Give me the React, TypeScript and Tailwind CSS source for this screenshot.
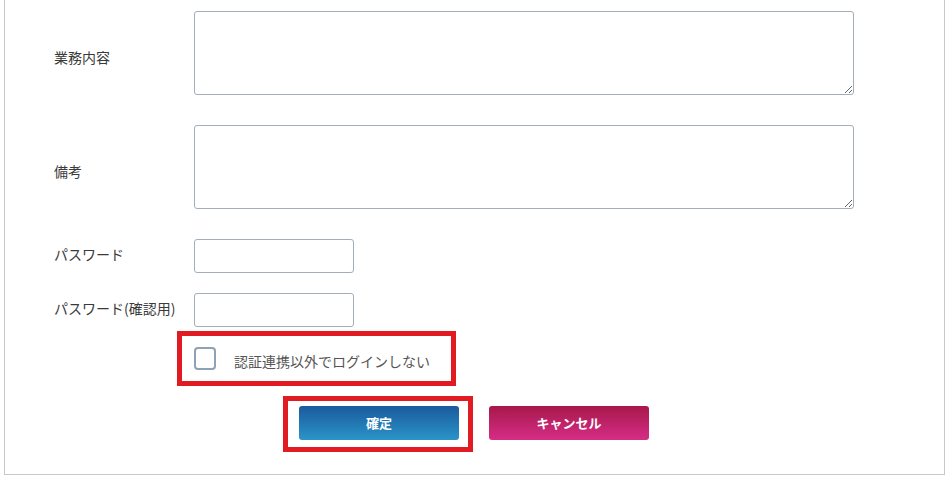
import React from 'react';

const font = { fontFamily: '"Noto Sans CJK JP", "Noto Sans", sans-serif' };

const App: React.FC = () => {
  return (
    <div className="w-[949px] h-[479px] bg-white overflow-hidden" style={font}>
      <div className="ml-[4px] w-[941px] h-[475px] border-x border-b border-[#c8c8c8] pt-[11px]">
        {/* 業務内容 */}
        <div className="flex items-center">
          <label className="w-[189px] pl-[49px] pt-[8px] text-[14px] text-[#3a3a3a]">業務内容</label>
          <textarea className="block w-[660px] h-[84px] border border-[#a3aeb8] rounded-[3px] bg-white outline-none" />
        </div>

        {/* 備考 */}
        <div className="flex items-center mt-[30px]">
          <label className="w-[189px] pl-[49px] pt-[8px] text-[14px] text-[#3a3a3a]">備考</label>
          <textarea className="block w-[660px] h-[84px] border border-[#a3aeb8] rounded-[3px] bg-white outline-none" />
        </div>

        {/* パスワード */}
        <div className="flex items-center mt-[30px]">
          <label className="w-[189px] pl-[49px] pb-[4px] text-[14px] text-[#3a3a3a]">パスワード</label>
          <input type="password" className="block w-[160px] h-[34px] border border-[#a3aeb8] rounded-[3px] bg-white outline-none" />
        </div>

        <div className="flex items-center mt-[20px]">
          <label className="w-[189px] pl-[49px] pb-[4px] text-[14px] text-[#3a3a3a] whitespace-nowrap">パスワード(確認用)</label>
          <input type="password" className="block w-[160px] h-[34px] border border-[#a3aeb8] rounded-[3px] bg-white outline-none" />
        </div>

        {/* checkbox, highlighted */}
        <div className="ml-[172px] mt-[4px] w-[279px] h-[55px] border-[5px] border-[#e21b23] flex items-center pl-[12px]">
          <div className="w-[22px] h-[23px] rounded-[4px] border-2 border-[#8ea2b5] bg-white" />
          <span className="ml-[18px] text-[14px] text-[#555] mt-[5px]">認証連携以外でログインしない</span>
        </div>

        {/* buttons */}
        <div className="flex items-center mt-[10px]">
          <div className="ml-[278px] w-[190px] h-[56px] border-[5px] border-[#e21b23] flex items-center pl-[11px] pb-[2px]">
            <button className="w-[160px] h-[34px] rounded-[3px] bg-gradient-to-b from-[#1b5a9c] to-[#2b94c9] text-white text-[13px] font-bold">
              確定
            </button>
          </div>
          <button className="ml-[16px] mb-[2px] w-[160px] h-[34px] rounded-[3px] bg-gradient-to-b from-[#a8174a] to-[#d52d87] text-white text-[13px] font-bold">
            キャンセル
          </button>
        </div>
      </div>
    </div>
  );
};

export default App;
